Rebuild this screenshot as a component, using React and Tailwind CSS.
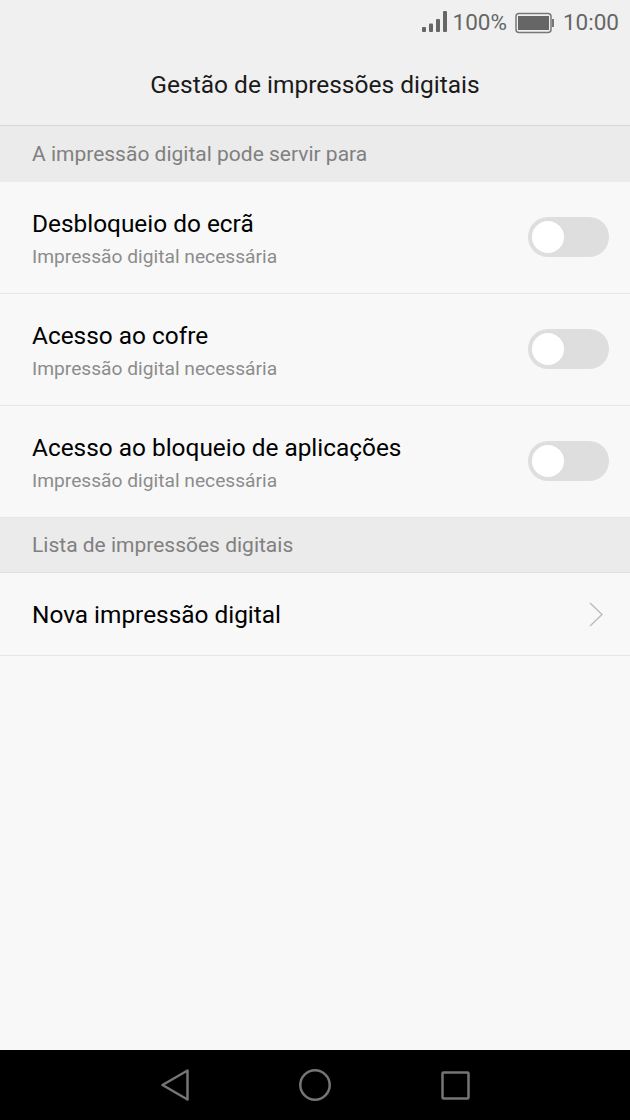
import React from 'react';

const Toggle = () => (
  <div className="w-[81px] h-10 -mt-[1px] rounded-full bg-[#dedede] flex items-center pl-[4px] shrink-0">
    <div className="w-8 h-8 rounded-full bg-white" />
  </div>
);

const SectionHeader = ({ label, className }) => (
  <div className={`${className} bg-[#ebebeb] flex items-center pl-8 text-[21px] text-[#808080]`}>{label}</div>
);

const ToggleRow = ({ title }) => (
  <div className="h-28 border-b border-[#e6e6e6] flex items-center justify-between pl-8 pr-[21px]">
    <div className="flex flex-col pt-[2px]">
      <div className="text-[24.4px] leading-[30px] text-black">{title}</div>
      <div className="text-[19.2px] leading-6 mt-[6px] text-[#8c8c8c]">Impressão digital necessária</div>
    </div>
    <Toggle />
  </div>
);

export default function App() {
  return (
    <div className="w-[630px] h-[1120px] flex flex-col bg-[#f8f8f8] font-['Roboto',sans-serif] overflow-hidden">
      {/* Status bar + title */}
      <div className="h-[126px] bg-[#f0f0f0] border-b border-[#d6d6d6] flex flex-col shrink-0">
        <div className="h-[45px] flex items-center justify-end pr-[11px] text-[22.5px] text-[#666666]">
          <svg width="26" height="24" viewBox="0 0 26 24" className="mr-[5px]">
            <rect x="0" y="16" width="4" height="5" rx="1" fill="#666666" />
            <rect x="7" y="12.5" width="4" height="8.5" rx="1" fill="#666666" />
            <rect x="14" y="8" width="4" height="13" rx="1" fill="#666666" />
            <rect x="21" y="0" width="4" height="21" rx="1" fill="#666666" />
          </svg>
          <span>100%</span>
          <svg width="40" height="22" viewBox="0 0 40 22" className="ml-2 mr-2">
            <rect x="1" y="1.5" width="35" height="19" rx="3" fill="none" stroke="#777777" strokeWidth="1.5" />
            <rect x="3" y="4" width="31" height="14" fill="#666666" />
            <rect x="37" y="7" width="2" height="8" fill="#777777" />
          </svg>
          <span>10:00</span>
        </div>
        <div className="h-[80px] flex items-center justify-center text-[24.5px] text-[#1a1a1a]">
          Gestão de impressões digitais
        </div>
      </div>

      <SectionHeader label="A impressão digital pode servir para" className="h-14 pt-[1px]" />
      <ToggleRow title="Desbloqueio do ecrã" />
      <ToggleRow title="Acesso ao cofre" />
      <ToggleRow title="Acesso ao bloqueio de aplicações" />
      <SectionHeader label="Lista de impressões digitais" className="h-[55px] pt-[2px] border-b border-[#e0e0e0]" />

      <div className="h-[83px] border-b border-[#e6e6e6] flex items-center justify-between pl-8 pr-[27px] shrink-0">
        <span className="text-[24.4px] pt-[2px] text-black">Nova impressão digital</span>
        <svg width="14" height="25" viewBox="0 0 14 25" fill="none" stroke="#bdbdbd" strokeWidth="1.5">
          <path d="M1 1 L13 12.5 L1 24" />
        </svg>
      </div>

      <div className="flex-1" />

      {/* Nav bar */}
      <div className="h-[70px] bg-black flex items-center justify-center gap-[110px] shrink-0">
        <svg width="28" height="32" viewBox="0 0 28 32" fill="none" stroke="#757575" strokeWidth="2.5" strokeLinejoin="round">
          <path d="M26.5 1.5 L1.5 16 L26.5 30.5 Z" />
        </svg>
        <svg width="32" height="32" viewBox="0 0 32 32" fill="none" stroke="#757575" strokeWidth="2.5">
          <circle cx="16" cy="16" r="14.7" />
        </svg>
        <svg width="29" height="29" viewBox="0 0 29 29" fill="none" stroke="#757575" strokeWidth="2.5" strokeLinejoin="round">
          <rect x="1.5" y="1.5" width="26" height="26" rx="1" />
        </svg>
      </div>
    </div>
  );
}
